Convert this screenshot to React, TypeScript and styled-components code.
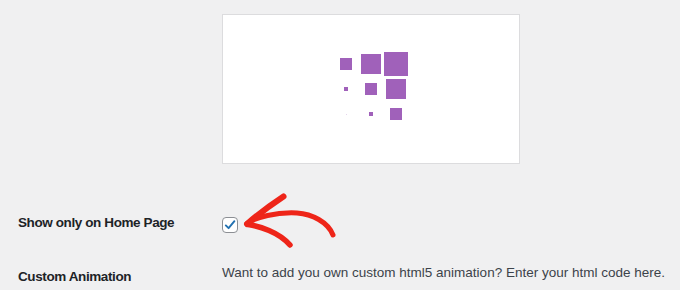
import React from 'react';
import styled, {createGlobalStyle} from 'styled-components';

const GlobalStyle = createGlobalStyle`
    body {
        margin: 0;
        background: #f0f0f1;
        font-family: "Liberation Sans", Arial, sans-serif;
        font-size: 13.5px;
        color: #3c434a;
    }
`;

// square sizes of the loader frame, row by row
const squares = [
    [12, 20, 24],
    [4, 12, 20],
    [1, 4, 12],
];

export default function App() {
    return (
        <>
            <GlobalStyle />
            <Page>
                <Row>
                    <span />
                    <Preview>
                        <Loader>
                            {squares.flat().map((size, i) =>
                                <Cell key={i}>
                                    <Square style={{width: size, height: size, opacity: size < 2 ? 0.25 : 0.95}} />
                                </Cell>
                            )}
                        </Loader>
                    </Preview>
                </Row>
                <Row $top={49}>
                    <Label>Show only on Home Page</Label>
                    <CheckBox role="checkbox" aria-checked="true">
                        <svg width="12" height="12" viewBox="0 0 12 12">
                            <path d="M1.8 6.4 L4.6 9.2 L10.4 2.2" fill="none" stroke="#2271b1" strokeWidth="1.9"
                                  strokeLinecap="round" strokeLinejoin="round" />
                        </svg>
                    </CheckBox>
                </Row>
                <Row $top={30}>
                    <Label $offset={4}>Custom Animation</Label>
                    <Description>Want to add you own custom html5 animation? Enter your html code here.</Description>
                </Row>
                <Arrow width="106" height="66" viewBox="0 0 106 66">
                    <g fill="none" stroke="#ee2519" strokeLinecap="round" strokeLinejoin="round">
                        <path d="M11 38 Q27 24 47.5 10.5" strokeWidth="6" />
                        <path d="M12 38.5 C23 40 43 46 54 59" strokeWidth="5.5" />
                        <path d="M11 37.5 C20 31 40 26 61 27 C76 28 92 36 97 49" strokeWidth="5" />
                    </g>
                </Arrow>
            </Page>
        </>
    );
}

const Page = styled.div`
    position: relative;
    padding: 14px 0 0 18px;
    height: 290px;
    box-sizing: border-box;
    overflow: hidden;
`;

const Row = styled.div<{$top?: number}>`
    display: grid;
    grid-template-columns: 204px 1fr;
    align-items: start;
    margin-top: ${p => p.$top ?? 0}px;
`;

const Label = styled.div<{$offset?: number}>`
    font-weight: 700;
    color: #1d2327;
    line-height: 20px;
    letter-spacing: -0.4px;
    white-space: nowrap;
    padding-top: ${p => p.$offset ?? 0}px;
`;

const Description = styled.div`
    line-height: 20px;
    letter-spacing: 0;
    white-space: nowrap;
    color: #3c434a;
`;

const Preview = styled.div`
    width: 298px;
    height: 150px;
    box-sizing: border-box;
    background: #fff;
    border: 1px solid #dcdcde;
    display: flex;
    align-items: center;
    justify-content: center;
`;

const Loader = styled.div`
    display: grid;
    grid-template-columns: repeat(3, 25px);
    grid-template-rows: repeat(3, 25px);
`;

const Cell = styled.div`
    display: flex;
    align-items: center;
    justify-content: center;
`;

const Square = styled.div`
    background: #9b59b6;
`;

const CheckBox = styled.span`
    margin-top: 4px;
    width: 16px;
    height: 16px;
    box-sizing: border-box;
    border: 1px solid #8c8f94;
    border-radius: 4px;
    background: #fff;
    display: flex;
    align-items: center;
    justify-content: center;
`;

const Arrow = styled.svg`
    position: absolute;
    left: 236px;
    top: 186px;
`;
